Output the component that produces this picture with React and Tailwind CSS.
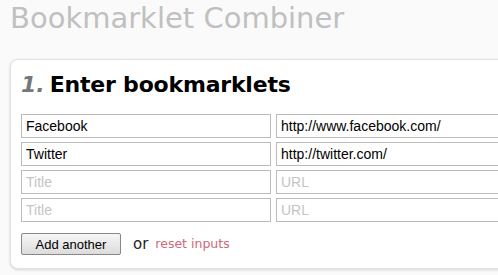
import React from "react";

const rows = [
  { title: "Facebook", url: "http://www.facebook.com/" },
  { title: "Twitter", url: "http://twitter.com/" },
  { title: "", url: "" },
  { title: "", url: "" },
];

const App = () => {
  return (
    <div className="min-h-[275px] bg-[#fafafa] overflow-hidden" style={{ width: 498 }}>
      <h1 className="pl-[10px] pt-[1px] text-[29px] leading-[34px] text-[#c0c0c0] font-['Verdana','DejaVu_Sans',sans-serif]">
        Bookmarklet Combiner
      </h1>

      <div className="ml-[10px] mt-[24px] w-[520px] h-[210px] bg-white rounded-[8px] border border-[#e2e2e2] shadow-[0_1px_3px_rgba(0,0,0,0.15)] pl-[10px] pt-[12px]">
        <h2 className="flex text-[22px] leading-[26px] font-bold text-black font-['Verdana','DejaVu_Sans',sans-serif]">
          <span className="italic text-[#777]">1.</span>
          <span className="ml-[5px] tracking-[-0.2px]">Enter bookmarklets</span>
        </h2>

        <div className="mt-[16px] flex flex-col gap-[4px]">
          {rows.map((r, idx) => (
            <div key={idx} className="flex gap-[5px]">
              <input
                defaultValue={r.title}
                placeholder="Title"
                className="w-[250px] h-[24px] px-[4px] border border-[#bbb] bg-white text-[14px] text-black placeholder:text-[#c4c4c4] outline-none font-['Liberation_Sans',Arial,sans-serif]"
              />
              <input
                defaultValue={r.url}
                placeholder="URL"
                className="w-[240px] h-[24px] px-[4px] border border-[#bbb] bg-white text-[14px] text-black placeholder:text-[#c4c4c4] outline-none font-['Liberation_Sans',Arial,sans-serif]"
              />
            </div>
          ))}
        </div>

        <div className="mt-[11px] flex items-center">
          <button className="w-[100px] h-[22px] border border-[#888] rounded-[2px] bg-gradient-to-b from-[#f6f6f6] to-[#dcdcdc] text-[13px] text-black font-['Liberation_Sans',Arial,sans-serif]">
            Add another
          </button>
          <span className="ml-[12px] text-[15px] text-[#222] font-['Verdana','DejaVu_Sans',sans-serif]">or</span>
          <a className="ml-[7px] text-[12.5px] text-[#d0687a] font-['Verdana','DejaVu_Sans',sans-serif]" href="#">
            reset inputs
          </a>
        </div>
      </div>
    </div>
  );
};

export default App;
